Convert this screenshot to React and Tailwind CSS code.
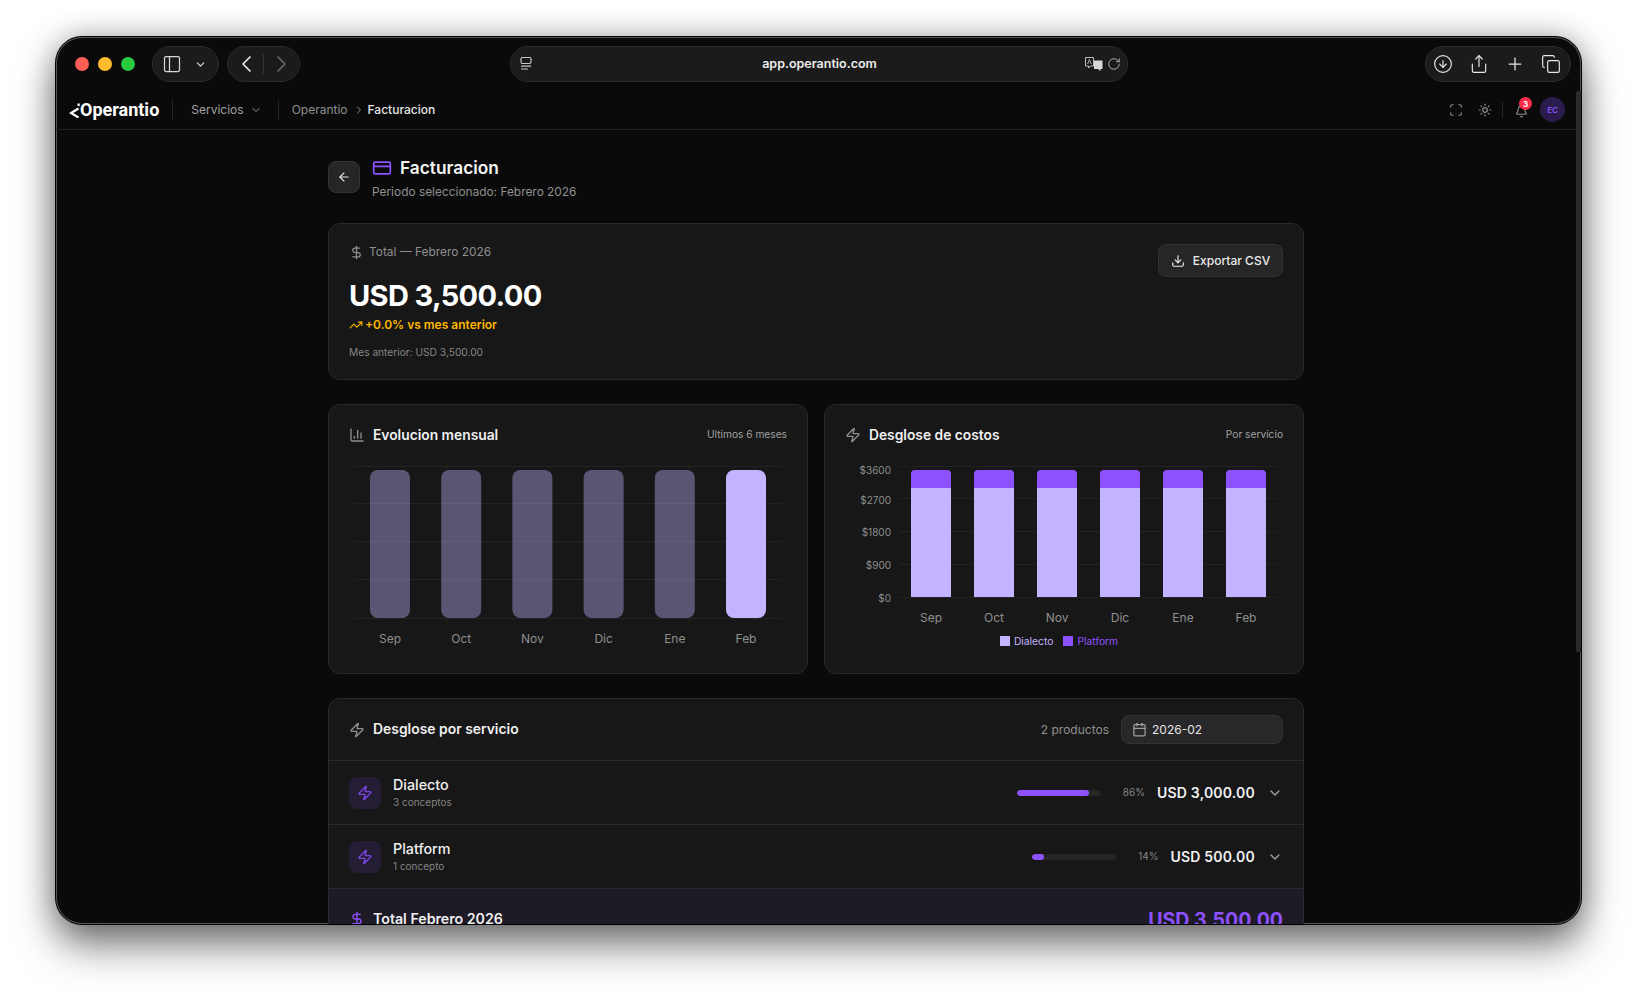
import React from "react";
import {
  ChevronDown, ChevronRight, RotateCw, CircleArrowDown, Share, Plus, Copy, Scan, Sun, Bell,
  ArrowLeft, CreditCard, DollarSign, TrendingUp, Download, ChartColumn, Zap, Calendar, PanelLeft,
} from "lucide-react";

const MONTHS = ["Sep", "Oct", "Nov", "Dic", "Ene", "Feb"];
const FONT = "Inter, sans-serif";

function Card({ className = "", children }) {
  return <div className={"rounded-[12px] border border-[#2a2a2a] bg-[#171717] " + className}>{children}</div>;
}

function CardHead({ icon, title, note }) {
  return (
    <div className="flex h-5 items-center justify-between">
      <div className="flex items-center gap-2">
        {icon}
        <span className="text-[13.8px] font-semibold leading-5 text-[#f0f0f0]">{title}</span>
      </div>
      <span className="text-[10.2px] text-[#a1a1a1]">{note}</span>
    </div>
  );
}

function MonthlyChart() {
  const lines = [6, 43, 81, 119, 158];
  return (
    <svg width="438" height="190" className="block" style={{ fontFamily: FONT }}>
      {lines.map((y) => (
        <line key={y} x1="5" x2="433" y1={y + 0.5} y2={y + 0.5} stroke="#232323" />
      ))}
      {MONTHS.map((m, i) => {
        const x = 21 + i * 71.2;
        return (
          <g key={m}>
            <rect x={x} y="10" width="40" height="148" rx="8" fill="#c4b4ff" opacity={i === 5 ? 1 : 0.4} />
            <text x={x + 20} y="183" textAnchor="middle" fontSize="12" fill="#8f8f8f">{m}</text>
          </g>
        );
      })}
    </svg>
  );
}

function CostChart() {
  const ticks = [["$3600", 6, 13.5], ["$2700", 38, 43.5], ["$1800", 71, 76], ["$900", 104, 108.5], ["$0", 137, 141.5]];
  return (
    <svg width="438" height="170" className="block" style={{ fontFamily: FONT }}>
      {ticks.map(([t, y, ty]) => (
        <g key={t}>
          <line x1="55" x2="432" y1={y + 0.5} y2={y + 0.5} stroke="#232323" />
          <text x="46" y={ty} textAnchor="end" fontSize="10" fill="#8f8f8f">{t}</text>
        </g>
      ))}
      {MONTHS.map((m, i) => {
        const x = 66 + i * 63;
        return (
          <g key={m}>
            <rect x={x} y="28" width="40" height="109" fill="#c4b4ff" />
            <path d={`M${x} 28V14a4 4 0 0 1 4-4h32a4 4 0 0 1 4 4V28Z`} fill="#8e51ff" />
            <text x={x + 20} y="162" textAnchor="middle" fontSize="12" fill="#8f8f8f">{m}</text>
          </g>
        );
      })}
    </svg>
  );
}

function ServiceRow({ name, sub, pct, amount, fill }) {
  return (
    <div className="flex h-[64px] items-center border-b border-[#2a2a2a] px-5">
      <div className="flex h-8 w-8 items-center justify-center rounded-[8px] bg-[#241d33]">
        <Zap size={16} className="text-[#7c45e8]" />
      </div>
      <div className="ml-3 flex-1 pt-[1px]">
        <div className="mb-[1px] text-[14.3px] font-medium leading-[18px] text-[#f0f0f0]">{name}</div>
        <div className="text-[10px] leading-[15px] text-[#858585]">{sub}</div>
      </div>
      <div className="h-[6px] w-[84px] overflow-hidden rounded-full bg-[#262626]">
        <div className="h-full rounded-full bg-violet-500" style={{ width: fill }} />
      </div>
      <span className="ml-[22px] text-[10px] text-[#858585]">{pct}</span>
      <span className="ml-3 text-[14px] font-semibold tracking-[0.2px] text-[#f0f0f0]">{amount}</span>
      <ChevronDown size={16} className="ml-3 text-[#a1a1a1]" />
    </div>
  );
}

export default function App() {
  return (
    <div className="h-[998px] w-full overflow-hidden bg-white pl-[56px] pt-[37px]" style={{ fontFamily: FONT }}>
      <div className="relative flex h-[887px] w-[1525px] flex-col overflow-hidden rounded-[26px] bg-[#0a0a0a] shadow-[0_0_0_1px_#000,inset_0_0_0_1px_#555,0_22px_40px_rgba(0,0,0,0.5),0_0_30px_rgba(0,0,0,0.3)]">
        {/* Browser title bar */}
        <div className="flex h-[53px] shrink-0 items-start pl-[19px] pr-[10px] pt-[9px]">
          <div className="flex h-9 w-full items-center">
            <div className="flex items-center gap-[9px]">
              <span className="h-[14px] w-[14px] rounded-full bg-[#ff5f57]" />
              <span className="h-[14px] w-[14px] rounded-full bg-[#febc2e]" />
              <span className="h-[14px] w-[14px] rounded-full bg-[#28c840]" />
            </div>
            <div className="ml-[17px] flex h-9 w-[67px] items-center justify-between rounded-full border border-[#2c2c2c] bg-[#1b1b1b] pl-[9px] pr-[11px] text-[#d8d8d8]">
              <PanelLeft size={20} strokeWidth={1.5} />
              <ChevronDown size={13} strokeWidth={2.2} />
            </div>
            <div className="ml-2 flex h-9 w-[73px] items-center rounded-full border border-[#2c2c2c] bg-[#1b1b1b]">
              <span className="flex flex-1 justify-center">
                <svg width="12" height="18" viewBox="0 0 12 18" fill="none" stroke="#e8e8e8" strokeWidth="1.7" strokeLinecap="round" strokeLinejoin="round">
                  <path d="M10 2 3 9l7 7" />
                </svg>
              </span>
              <span className="h-[20px] w-px bg-[#333]" />
              <span className="flex flex-1 justify-center">
                <svg width="12" height="18" viewBox="0 0 12 18" fill="none" stroke="#666" strokeWidth="1.7" strokeLinecap="round" strokeLinejoin="round">
                  <path d="M2 2l7 7-7 7" />
                </svg>
              </span>
            </div>
            <div className="ml-[210px] flex h-9 w-[618px] items-center rounded-full border border-[#2c2c2c] bg-[#1b1b1b] pl-[7px] pr-[6px]">
              <span className="w-[37px]">
                <svg width="16" height="16" viewBox="0 0 16 16" fill="none" stroke="#c8c8c8" strokeWidth="1.2">
                  <rect x="3" y="1.5" width="10" height="6" rx="1.5" />
                  <path d="M3 10.2h10M3 13h7" />
                </svg>
              </span>
              <span className="flex-1 pt-[1px] text-center text-[12.5px] font-semibold text-[#ececec]">app.operantio.com</span>
              <svg width="20" height="16" viewBox="0 0 20 16" fill="none">
                <path d="M1.5 1.5h8v8.5h-3l-2 2v-2h-3z" stroke="#bdbdbd" strokeWidth="1" />
                <path d="M3.6 8l1.8-4.5L7.2 8" stroke="#bdbdbd" strokeWidth="0.9" />
                <path d="M10 4.5h8.5v8.5h-2v2.2l-2.5-2.2h-4z" fill="#d8d8d8" />
              </svg>
              <RotateCw size={14} strokeWidth={1.5} className="ml-[3px] text-[#bdbdbd]" />
            </div>
            <div className="ml-auto flex h-9 w-[146px] items-center justify-between rounded-full border border-[#2c2c2c] bg-[#1b1b1b] pl-[7px] pr-[9px] text-[#e8e8e8]">
              <CircleArrowDown size={20} strokeWidth={1.4} />
              <Share size={20} strokeWidth={1.4} />
              <Plus size={20} strokeWidth={1.5} />
              <Copy size={20} strokeWidth={1.4} />
            </div>
          </div>
        </div>

        {/* App navbar */}
        <div className="flex h-[40px] shrink-0 items-center border-b border-[#222] pr-[16px]">
          <div className="ml-[13px] flex items-center">
            <svg width="11" height="16" viewBox="0 0 11 16" fill="none">
              <path d="M9.5 6.5L2 11l7.5 4.5" stroke="#fff" strokeWidth="2.2" />
              <rect x="8.5" y="1.5" width="2.2" height="2.5" fill="#fff" />
            </svg>
            <span className="text-[18px] font-bold leading-none text-white" style={{ fontFamily: "Roboto, sans-serif" }}>Operantio</span>
          </div>
          <span className="ml-[13px] h-5 w-px bg-[#262626]" />
          <span className="ml-[18px] text-[12px] text-[#a1a1a1]">Servicios</span>
          <ChevronDown size={12} className="ml-[6px] text-[#8f8f8f]" />
          <span className="ml-[16px] h-5 w-px bg-[#262626]" />
          <span className="ml-[13px] text-[12px] text-[#8f8f8f]">Operantio</span>
          <ChevronRight size={12} className="ml-[5px] mr-[3px] text-[#8f8f8f]" />
          <span className="text-[12px] font-medium text-[#e5e5e5]">Facturacion</span>
          <div className="ml-auto flex items-center">
            <Scan size={14} className="text-[#8f8f8f]" />
            <Sun size={14} className="ml-[15px] text-[#8f8f8f]" />
            <span className="ml-[10px] h-4 w-px bg-[#262626]" />
            <div className="relative ml-[12px] translate-y-[2px]">
              <Bell size={13} className="text-[#8f8f8f]" />
              <span className="absolute -right-[4px] -top-[8px] flex h-[13px] w-[13px] items-center justify-center rounded-full bg-[#fb2c46] text-[8px] font-bold text-white">3</span>
            </div>
            <span className="ml-[12px] flex h-[25px] w-[25px] items-center justify-center rounded-full bg-[#2a1c4d] text-[8px] font-semibold text-[#8e51ff]">EC</span>
          </div>
        </div>

        {/* Page */}
        <div className="min-h-0 flex-1 overflow-hidden pr-[5px]">
          <div className="mx-auto w-[976px] pt-[31px]">
            <div className="flex items-start">
              <button className="flex h-8 w-8 items-center justify-center rounded-[8px] border border-[#333] bg-[#262626] text-[#e5e5e5]">
                <ArrowLeft size={14} />
              </button>
              <div className="ml-3 -mt-[1px]">
                <div className="flex h-[16px] items-center">
                  <CreditCard size={20} strokeWidth={2} className="text-[#8e51ff]" />
                  <span className="ml-2 text-[17.3px] font-semibold leading-[16px] text-[#f5f5f5]">Facturacion</span>
                </div>
                <div className="mt-[8px] text-[11.9px] leading-[16px] text-[#8f8f8f]">Periodo seleccionado: Febrero 2026</div>
              </div>
            </div>

            <Card className="mt-[23px] flex h-[157px] justify-between p-5">
              <div>
                <div className="flex h-4 items-center text-[11.9px] text-[#8f8f8f]">
                  <DollarSign size={15} />
                  <span className="ml-[5px]">Total — Febrero 2026</span>
                </div>
                <div className="mt-[18px] text-[29px] font-bold leading-[36px] tracking-[-0.65px] text-white">USD 3,500.00</div>
                <div className="mt-[2px] flex h-[18px] items-center text-[12px] font-semibold text-[#fdb700]">
                  <TrendingUp size={14} />
                  <span className="ml-[2px]">+0.0% vs mes anterior</span>
                </div>
                <div className="mt-[11px] text-[10.2px] leading-[15px] text-[#858585]">Mes anterior: USD 3,500.00</div>
              </div>
              <button className="flex h-[33px] w-[125px] items-center justify-center gap-2 rounded-[8px] border border-[#333] bg-[#262626] text-[12px] font-medium text-[#ececec]">
                <Download size={14} />
                Exportar CSV
              </button>
            </Card>

            <div className="mt-[24px] grid grid-cols-2 gap-4">
              <Card className="h-[270px] px-5 pt-5">
                <CardHead icon={<ChartColumn size={16} className="text-[#8f8f8f]" />} title="Evolucion mensual" note="Ultimos 6 meses" />
                <div className="mt-[15px]"><MonthlyChart /></div>
              </Card>
              <Card className="h-[270px] px-5 pt-5">
                <CardHead icon={<Zap size={16} className="text-[#8f8f8f]" />} title="Desglose de costos" note="Por servicio" />
                <div className="mt-[15px]"><CostChart /></div>
                <div className="mt-[5px] flex items-center justify-center gap-[4px] pr-[10px] text-[10.3px] leading-[12px]">
                  <span className="h-[10px] w-[10px] bg-[#c4b4ff]" />
                  <span className="text-[#c4b4ff]">Dialecto</span>
                  <span className="ml-[6px] h-[10px] w-[10px] bg-violet-500" />
                  <span className="text-violet-500">Platform</span>
                </div>
              </Card>
            </div>

            <Card className="mt-[24px] overflow-hidden">
              <div className="flex h-[62px] items-center border-b border-[#2a2a2a] px-5">
                <Zap size={16} className="text-[#8f8f8f]" />
                <span className="ml-2 text-[13.9px] font-semibold text-[#f0f0f0]">Desglose por servicio</span>
                <span className="ml-auto text-[12px] text-[#8f8f8f]">2 productos</span>
                <div className="ml-3 flex h-[29px] w-[162px] items-center rounded-[8px] border border-[#333] bg-[#28282a] pl-[10px] text-[12px] text-[#e5e5e5]">
                  <Calendar size={15} className="text-[#a1a1a1]" />
                  <span className="ml-[5px]">2026-02</span>
                </div>
              </div>
              <ServiceRow name="Dialecto" sub="3 conceptos" pct="86%" amount="USD 3,000.00" fill="86%" />
              <ServiceRow name="Platform" sub="1 concepto" pct="14%" amount="USD 500.00" fill="14%" />
              <div className="flex h-[60px] items-center bg-[#1e1b27] px-5">
                <DollarSign size={16} className="text-[#8e51ff]" />
                <span className="ml-2 text-[14.2px] font-semibold text-[#f0f0f0]">Total Febrero 2026</span>
                <span className="ml-auto pt-[3px] text-[19.5px] font-bold text-[#8e51ff]">USD 3,500.00</span>
              </div>
            </Card>
          </div>
        </div>

        {/* Scrollbar thumb */}
        <div className="absolute right-0 top-[54px] h-[561px] w-[5px] rounded-l-[2px] bg-[#2b2b2b]" />
      </div>
    </div>
  );
}
